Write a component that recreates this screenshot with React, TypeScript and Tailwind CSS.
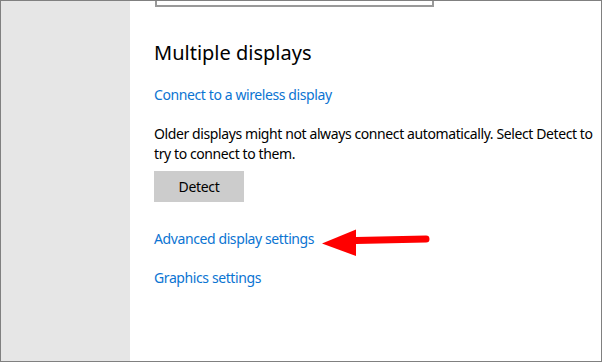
export default function App() {
  const font = { fontFamily: '"Noto Sans", "Open Sans", sans-serif' };
  return (
    <div
      className="flex h-[362px] w-[602px] overflow-hidden border border-[#808080] bg-white"
      style={font}
    >
      <aside className="w-[129px] shrink-0 bg-[#e6e6e6]" />

      <main className="relative flex-1 pl-[24px]">
        <div className="-mt-[40px] ml-[1px] h-[46px] w-[279px] border-2 border-[#999999]" />

        <h2 className="mt-[32px] text-[20px] leading-[28px] text-black">Multiple displays</h2>

        <a className="mt-[18px] block text-[14px] leading-[20px] tracking-[-0.4px] text-[#0b74d2]">
          Connect to a wireless display
        </a>

        <p className="mt-[19px] w-[448px] text-[14px] leading-[20px] tracking-[-0.4px] text-black">
          Older displays might not always connect automatically. Select Detect to try to
          connect to them.
        </p>

        <button className="mt-[7px] h-[31px] w-[90px] bg-[#cccccc] text-[14px] tracking-[-0.3px] text-black">
          Detect
        </button>

        <a className="mt-[27px] block text-[14px] leading-[20px] tracking-[-0.4px] text-[#0b74d2]">
          Advanced display settings
        </a>

        <a className="mt-[19px] block text-[14px] leading-[20px] tracking-[-0.4px] text-[#0b74d2]">
          Graphics settings
        </a>

        <svg
          className="absolute left-[192px] top-[227px]"
          width="108"
          height="30"
          viewBox="0 0 108 30"
        >
          <path d="M34 12.5 L104 11" stroke="#ff0000" strokeWidth="7" strokeLinecap="round" />
          <path d="M0 15.5 L34 1.5 L34 28 Z" fill="#ff0000" />
        </svg>
      </main>
    </div>
  );
}
